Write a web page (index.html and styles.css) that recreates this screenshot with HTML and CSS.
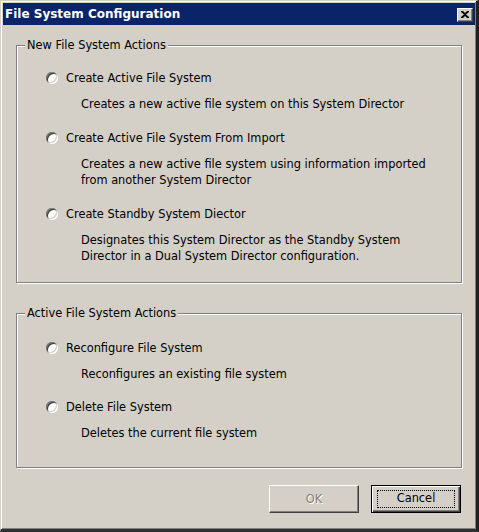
FILE: index.html
```html
<!DOCTYPE html>
<html>
<head>
<meta charset="utf-8">
<link rel="stylesheet" href="styles.css">
</head>
<body>
<div class="window">
  <div class="titlebar">
    <span class="title">File System Configuration</span>
    <span class="close-btn">
      <svg width="8" height="7" viewBox="0 0 8 7"><path d="M0 0h2l2 2 2-2h2v1L5 3.5 8 6v1H6L4 5 2 7H0V6l3-2.5L0 1z" fill="#000"/></svg>
    </span>
  </div>
  <div class="client">
    <fieldset class="group group-new">
      <legend>New File System Actions</legend>
      <div class="option first">
        <div class="opt-label"><span class="radio"></span>Create Active File System</div>
        <div class="desc">Creates a new active file system on this System Director</div>
      </div>
      <div class="option">
        <div class="opt-label"><span class="radio"></span>Create Active File System From Import</div>
        <div class="desc">Creates a new active file system using information imported<br>from another System Director</div>
      </div>
      <div class="option">
        <div class="opt-label"><span class="radio"></span>Create Standby System Diector</div>
        <div class="desc">Designates this System Director as the Standby System<br>Director in a Dual System Director configuration.</div>
      </div>
    </fieldset>
    <fieldset class="group group-active">
      <legend>Active File System Actions</legend>
      <div class="option first">
        <div class="opt-label"><span class="radio"></span>Reconfigure File System</div>
        <div class="desc">Reconfigures an existing file system</div>
      </div>
      <div class="option second">
        <div class="opt-label"><span class="radio"></span>Delete File System</div>
        <div class="desc">Deletes the current file system</div>
      </div>
    </fieldset>
    <div class="buttons">
      <button class="btn disabled">OK</button>
      <button class="btn default"><span class="focus">Cancel</span></button>
    </div>
  </div>
</div>
</body>
</html>
```
FILE: styles.css
```css
html, body {
  margin: 0;
  padding: 0;
  background: #d4d0c8;
}
body {
  font-family: "DejaVu Sans", Verdana, sans-serif;
  font-size: 11.4px;
  color: #000;
}
.window {
  width: 479px;
  height: 532px;
  box-sizing: border-box;
  background: #d4d0c8;
  border-style: solid;
  border-width: 1px 3px 3px 1px;
  border-color: #d4d0c8 #202020 #303030 #d4d0c8;
  box-shadow: inset 1px 1px 0 #fff, inset -1px -1px 0 #808080;
  padding: 2px 0 0 2px;
  display: flex;
  flex-direction: column;
}
.titlebar {
  height: 22px;
  margin-right: 1px;
  background: #0a246a;
  color: #fff;
  display: flex;
  align-items: center;
  justify-content: space-between;
  padding: 0 2px 0 2px;
}
.title {
  font-weight: bold;
  font-size: 12px;
}
.close-btn {
  width: 16px;
  height: 14px;
  box-sizing: border-box;
  background: #d4d0c8;
  border-style: solid;
  border-width: 1px;
  border-color: #fff #404040 #404040 #fff;
  box-shadow: inset -1px -1px 0 #808080;
  display: flex;
  align-items: center;
  justify-content: center;
  margin-top: 1px;
}
.close-btn svg { display: block; margin: 0 1px 1px 0; }
.client {
  flex: 1;
  padding: 13px 14px 0 13px;
  display: flex;
  flex-direction: column;
}
.group {
  margin: 0;
  padding: 0 0 0 29px;
  border: 1px solid #808080;
  box-shadow: 1px 1px 0 #fff, inset 1px 1px 0 #fff;
  min-width: 0;
}
.group legend {
  padding: 0 2px;
  margin-left: -21px;
  line-height: 14px;
  background: #d4d0c8;
}
.group-new { padding-bottom: 18px; }
.group-active { margin-top: 23px; padding-bottom: 26px; }
.option { margin-top: 18px; }
.option.first { margin-top: 18px; }
.group-active .option.first { margin-top: 20px; }
.group-active .option.second { margin-top: 17px; }
.opt-label {
  display: flex;
  align-items: center;
  height: 16px;
  line-height: 16px;
}
.radio {
  width: 12px;
  height: 12px;
  border-radius: 50%;
  background: #fff;
  box-shadow: inset 1px 1px 0 #808080, inset -1px -1px 0 #fff, inset 2px 2px 0 #404040, inset -2px -2px 0 #d4d0c8;
  margin-right: 8px;
  flex: none;
}
.desc {
  margin-top: 10px;
  margin-left: 35px;
  line-height: 16px;
}
.buttons {
  display: flex;
  justify-content: flex-end;
  gap: 12px;
  margin-top: 17px;
  padding-right: 1px;
}
.btn {
  width: 90px;
  height: 28px;
  box-sizing: border-box;
  font-family: inherit;
  font-size: 11.4px;
  background: #d4d0c8;
  border-style: solid;
  border-width: 1px;
  border-color: #fff #404040 #404040 #fff;
  box-shadow: inset -1px -1px 0 #808080, inset 1px 1px 0 #d4d0c8;
  padding: 0;
  display: flex;
  align-items: center;
  justify-content: center;
}
.btn.disabled {
  color: #808080;
  text-shadow: 1px 1px 0 #fff;
}
.btn.default {
  border: 1px solid #000;
  box-shadow: inset 1px 1px 0 #fff, inset -1px -1px 0 #404040, inset -2px -2px 0 #808080;
  color: #000;
}
.focus {
  display: block;
  width: 76px;
  height: 16px;
  line-height: 15px;
  border: 1px dotted #000;
  text-align: center;
}
```
